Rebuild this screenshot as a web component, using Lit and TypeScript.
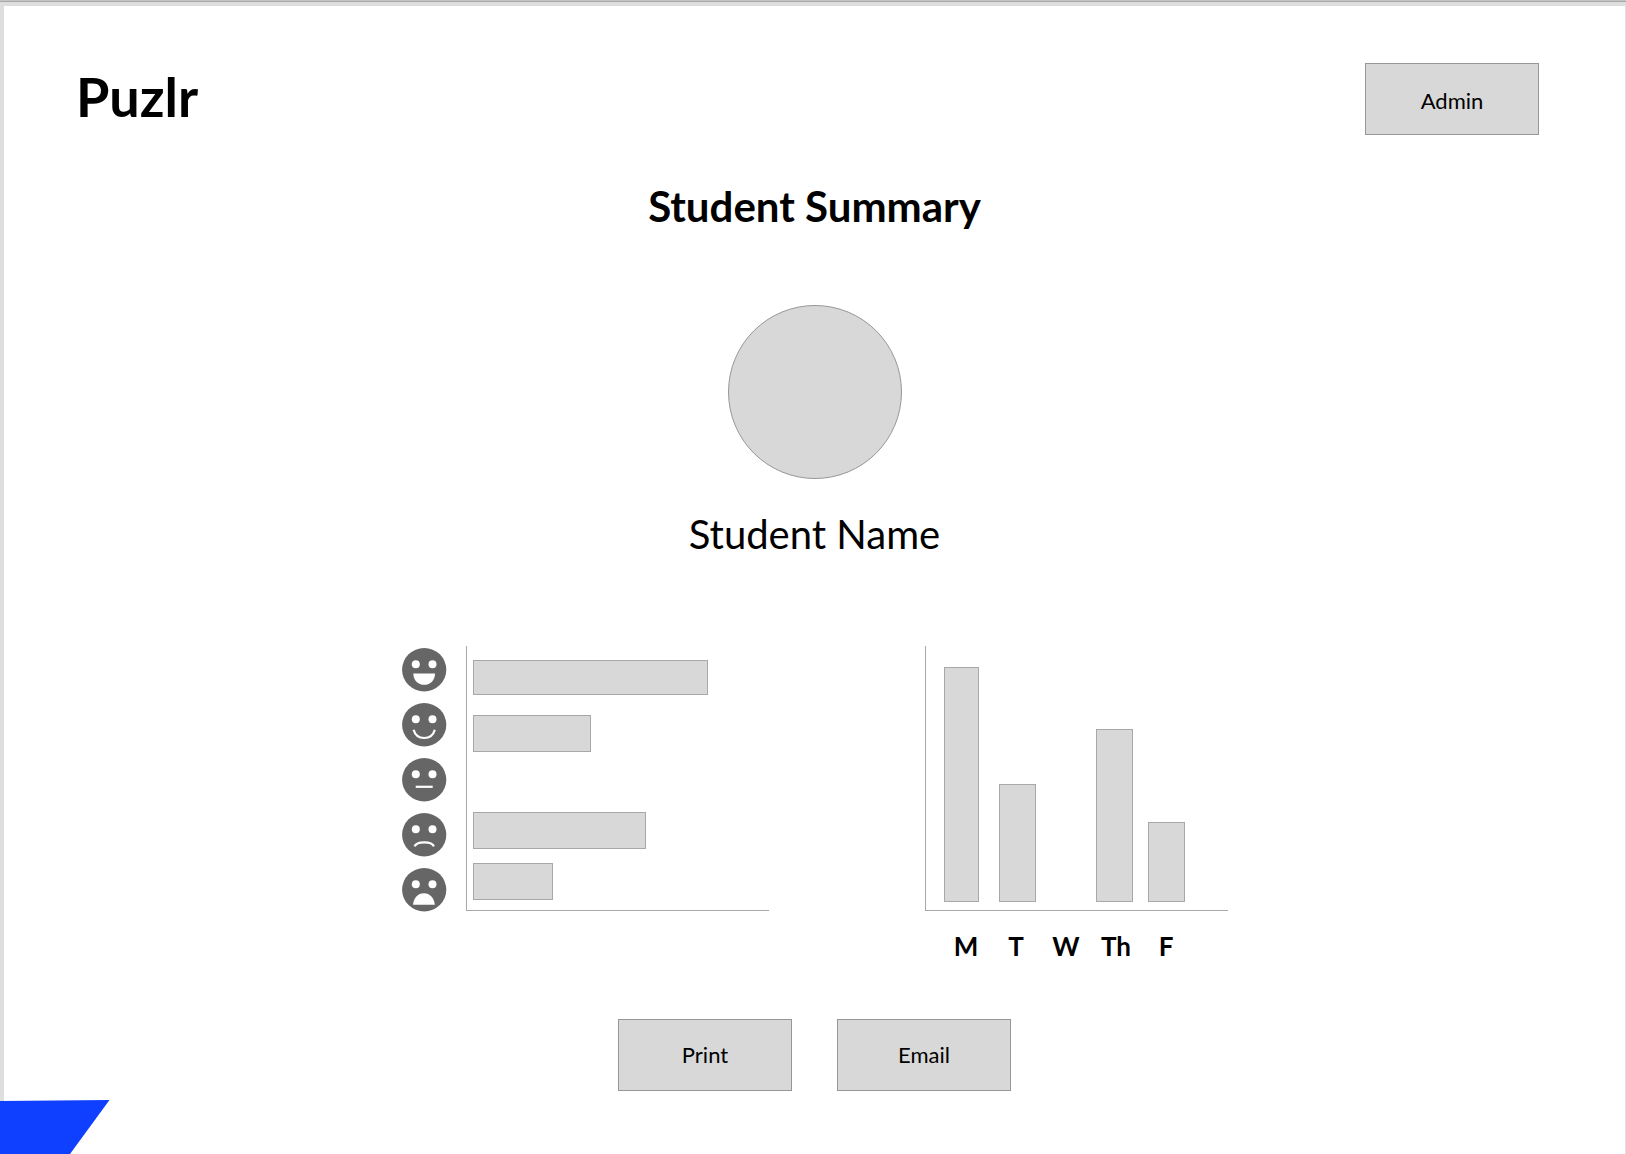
import { LitElement, html, css, svg } from "lit";
import { customElement, property } from "lit/decorators.js";

type Mood = "delighted" | "happy" | "neutral" | "sad" | "upset";

const moods: { mood: Mood; value: number }[] = [
  { mood: "delighted", value: 235 },
  { mood: "happy", value: 118 },
  { mood: "neutral", value: 0 },
  { mood: "sad", value: 173 },
  { mood: "upset", value: 80 },
];

const days: { day: string; value: number }[] = [
  { day: "M", value: 235 },
  { day: "T", value: 118 },
  { day: "W", value: 0 },
  { day: "Th", value: 173 },
  { day: "F", value: 80 },
];

const mouths = {
  delighted: svg`<path class="fill" d="M11.3 25.4H33C33 32 28.5 36.8 22.2 36.8S11.3 32 11.3 25.4Z"/>`,
  happy: svg`<path class="line" d="M11.6 26.8C13 32 17 35 22.2 35S31.4 32 32.8 26.8"/>`,
  neutral: svg`<path class="line" d="M13.7 28.8H30.7"/>`,
  sad: svg`<path class="line" d="M12.6 33.4C14.5 27.9 30 27.9 31.9 33.4"/>`,
  upset: svg`<path class="fill" d="M11 36.8C11.5 30 15.8 25.2 21.9 25.2S32.3 30 32.8 36.8Z"/>`,
};

@customElement("mood-face")
export class MoodFace extends LitElement {
  @property() mood: Mood = "neutral";

  static styles = css`
    :host { display: block; }
    .face { display: block; width: 45px; height: 44px; }
    .head { fill: #666; }
    .fill { fill: #fff; }
    .line { fill: none; stroke: #fff; stroke-width: 2.2; }
  `;

  render() {
    return html`<svg class="face" viewBox="0 0 45 44" role="img" aria-label=${this.mood}>
      <ellipse class="head" cx="22.2" cy="21.7" rx="22.1" ry="21.7" />
      <circle class="fill" cx="13.8" cy="16.2" r="4" />
      <circle class="fill" cx="30.5" cy="16.2" r="4" />
      ${mouths[this.mood]}
    </svg>`;
  }
}

@customElement("app-root")
export class AppRoot extends LitElement {
  static styles = css`
    :host {
      display: block;
      font-family: Lato, "Liberation Sans", sans-serif;
      color: #000;
    }
    .frame {
      position: relative;
      display: flex;
      flex-direction: column;
      min-height: 100vh;
      background: #fff;
    }
    .strip {
      box-sizing: border-box;
      height: 6px;
      border-top: 1px solid #c4c4c4;
      background: linear-gradient(#a8a8a8 1px, #dedede 1px);
    }
    .page {
      flex: 1;
      border-left: 4px solid #dedede;
      border-right: 1px solid #dedede;
    }
    .header {
      display: flex;
      align-items: flex-start;
      justify-content: space-between;
      padding: 57px 86px 0 72px;
    }
    .brand { margin: 0; font-size: 54px; line-height: 68px; font-weight: 700; }
    .button {
      box-sizing: border-box;
      width: 174px;
      height: 72px;
      padding: 0;
      border: 1px solid #979797;
      border-radius: 0;
      background: #d8d8d8;
      color: #000;
      font-family: inherit;
      font-size: 22px;
      line-height: 28px;
    }
    .header .button { padding-top: 4px; }
    .summary { display: flex; flex-direction: column; align-items: center; }
    .title { margin: 47px 0 0; font-size: 42px; line-height: 48px; font-weight: 700; }
    .avatar {
      box-sizing: border-box;
      width: 174px;
      height: 174px;
      margin-top: 75px;
      border: 1px solid #979797;
      border-radius: 50%;
      background: #d8d8d8;
    }
    .name { margin: 31px 0 0; font-size: 40px; line-height: 48px; font-weight: 400; }
    .charts {
      display: flex;
      justify-content: center;
      gap: 156px;
      margin-top: 88px;
      padding-left: 1px;
    }
    .chart { display: flex; gap: 19px; margin: 0; }
    .weekly { flex-direction: column; }
    .faces { display: flex; flex-direction: column; gap: 11px; padding-top: 2px; }
    .plot {
      display: grid;
      box-sizing: border-box;
      width: 303px;
      height: 265px;
      border-left: 1px solid #a8a8a8;
      border-bottom: 1px solid #a8a8a8;
    }
    .rows { grid-template-rows: 55px 55px 42px 51px 37px; padding: 14px 0 0 6px; }
    .columns {
      grid-template-columns: 55px 55px 42px 52px 37px;
      align-items: end;
      padding: 0 0 8px 18px;
    }
    .bar { box-sizing: border-box; border: 1px solid #a8a8a8; background: #d8d8d8; }
    .bar.empty { visibility: hidden; }
    .rows .bar { height: 37px; }
    .columns .bar { width: 37px; }
    .rows .bar:first-child { height: 35px; }
    .columns .bar:first-child { width: 35px; }
    .days {
      display: grid;
      grid-template-columns: repeat(5, 50px);
      padding-left: 16px;
      font-size: 26px;
      line-height: 32px;
      font-weight: 700;
      text-align: center;
    }
    .actions { display: flex; justify-content: center; gap: 45px; margin-top: 57px; padding-bottom: 62px; }
    .ribbon {
      position: absolute;
      left: 0;
      bottom: 0;
      width: 110px;
      height: 54px;
    }
  `;

  render() {
    return html`
      <div class="frame">
        <div class="strip"></div>
        <div class="page">
          <header class="header">
            <p class="brand">Puzlr</p>
            <button class="button" type="button">Admin</button>
          </header>
          <main>
            <section class="summary">
              <h1 class="title">Student Summary</h1>
              <div class="avatar"></div>
              <h2 class="name">Student Name</h2>
            </section>
            <section class="charts">
              <figure class="chart">
                <div class="faces">
                  ${moods.map((m) => html`<mood-face mood=${m.mood}></mood-face>`)}
                </div>
                <div class="plot rows">
                  ${moods.map((m) => html`<div class="bar ${m.value ? "" : "empty"}" style="width:${m.value}px"></div>`)}
                </div>
              </figure>
              <figure class="chart weekly">
                <div class="plot columns">
                  ${days.map((d) => html`<div class="bar ${d.value ? "" : "empty"}" style="height:${d.value}px"></div>`)}
                </div>
                <div class="days">${days.map((d) => html`<span>${d.day}</span>`)}</div>
              </figure>
            </section>
            <div class="actions">
              <button class="button" type="button">Print</button>
              <button class="button" type="button">Email</button>
            </div>
          </main>
        </div>
        <svg class="ribbon" viewBox="0 0 110 54" aria-hidden="true">
          <path fill="#0f3fff" d="M0 1L109.500 0L70 54H0Z" />
        </svg>
      </div>
    `;
  }
}
